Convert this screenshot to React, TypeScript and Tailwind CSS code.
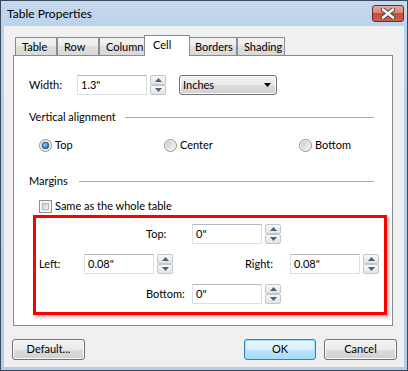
import React from 'react';

function Tri({ up, color = '#4c607f' }: { up?: boolean; color?: string }) {
  return (
    <svg width="7" height="4" viewBox="0 0 7 4">
      <polygon points={up ? '3.5,0 7,4 0,4' : '0,0 7,0 3.5,4'} fill={color} />
    </svg>
  );
}

function Spinner() {
  return (
    <div className="ml-[3px] flex h-[20px] w-[16px] flex-col">
      <div className="flex h-[10px] items-center justify-center rounded-[2px] border border-[#c3c6cc] bg-[linear-gradient(#f8f8f8,#e4e4e4)]">
        <Tri up />
      </div>
      <div className="flex h-[10px] items-center justify-center rounded-[2px] border border-[#c3c6cc] bg-[linear-gradient(#f8f8f8,#e4e4e4)]">
        <Tri />
      </div>
    </div>
  );
}

function Field({ value }: { value: string }) {
  return (
    <div className="flex h-[20px] w-[70px] items-center border border-[#dcdfe4] border-t-[#b5b8bf] bg-white pl-[3px]">
      {value}
    </div>
  );
}

function Radio({ checked }: { checked?: boolean }) {
  return (
    <svg width="13" height="13" viewBox="0 0 13 13">
      <defs>
        <linearGradient id="rbg" x1="0" y1="0" x2="1" y2="1">
          <stop offset="0" stopColor="#c9c9c9" />
          <stop offset="1" stopColor="#f7f7f7" />
        </linearGradient>
        <radialGradient id="rdot" cx="0.4" cy="0.4" r="0.6">
          <stop offset="0" stopColor="#8ad8fa" />
          <stop offset="1" stopColor="#1e64a4" />
        </radialGradient>
      </defs>
      <circle cx="6.5" cy="6.5" r="6" fill="#f4f4f4" stroke="#8e8f8f" />
      <circle cx="6.5" cy="6.5" r="4.5" fill="url(#rbg)" />
      {checked && <circle cx="6.5" cy="6.5" r="3.3" fill="url(#rdot)" stroke="#1b4f7c" strokeWidth="0.8" />}
    </svg>
  );
}

function Tab({ label, w }: { label: string; w: string }) {
  return (
    <div
      className={`${w} mt-[2px] h-[18px] border border-b-0 border-[#898c95] bg-[linear-gradient(#f3f3f3,#ececec_50%,#dfdfdf_50%,#d9d9d9)] pl-[6px] leading-[18px]`}
    >
      {label}
    </div>
  );
}

function Btn({ label, w, primary }: { label: string; w: string; primary?: boolean }) {
  return (
    <div
      className={
        primary
          ? `${w} flex h-[21px] items-center justify-center rounded-[3px] border border-[#3c7fb1] bg-[linear-gradient(#eaf6fd,#d9f0fc_50%,#bee6fd_50%,#a7d9f5)] shadow-[inset_0_0_0_1px_#9ee1fb]`
          : `${w} flex h-[21px] items-center justify-center rounded-[3px] border border-[#707070] bg-[linear-gradient(#f2f2f2,#ebebeb_50%,#dddddd_50%,#cfcfcf)] shadow-[inset_0_0_0_1px_#fbfbfb]`
      }
    >
      {label}
    </div>
  );
}

function Header({ label, gap }: { label: string; gap: string }) {
  return (
    <div className="flex h-[14px] items-center pl-[15px] pr-[18px] leading-[14px]">
      <span>{label}</span>
      <div className={`${gap} h-px flex-1 bg-[#a9a9a9]`} />
    </div>
  );
}

export default function App() {
  return (
    <div className="flex h-[371px] w-[408px] flex-col border border-[#3b4b5e] bg-[linear-gradient(#c5d9ef,#b9d1ea_30px,#b4cce7)] font-['Lato','Liberation_Sans',sans-serif] text-[11px] text-black">
      {/* title bar */}
      <div className="flex h-[25px] items-center justify-between pl-[6px] pr-[3px]">
        <span className="text-[12px]">Table Properties</span>
        <div className="flex h-[17px] w-[32px] items-center justify-center rounded-[3px] border border-[#6e2a24] bg-[linear-gradient(#e8ab9f,#d88574_45%,#c64c3b_50%,#c9604d)]">
          <svg width="16" height="11" viewBox="0 0 16 11">
            <path d="M3 1.5 L13 9.5 M13 1.5 L3 9.5" stroke="#4b4b4b" strokeWidth="4.5" strokeLinecap="round" />
            <path d="M3 1.5 L13 9.5 M13 1.5 L3 9.5" stroke="#f2f2f2" strokeWidth="2.6" strokeLinecap="round" />
          </svg>
        </div>
      </div>

      {/* client */}
      <div className="mx-[3px] flex h-[341px] flex-col bg-[#f0f0f0] pt-[9px]">
        <div className="ml-[11px] flex h-[20px] items-start">
          <Tab label="Table" w="w-[42px]" />
          <Tab label="Row" w="w-[42px]" />
          <Tab label="Column" w="w-[47px]" />
          <div className="relative z-10 -mx-[2px] h-[21px] w-[46px] border border-b-0 border-[#898c95] bg-white pl-[8px] leading-[17px]">
            Cell
          </div>
          <Tab label="Borders" w="w-[49px]" />
          <Tab label="Shading" w="w-[48px]" />
        </div>

        <div className="ml-[9px] flex h-[271px] w-[380px] flex-col border border-[#898c95] bg-white pt-[19px]">
          <div className="ml-[15px] flex h-[20px] items-center">
            <span className="w-[48px]">Width:</span>
            <Field value={'1.3"'} />
            <Spinner />
            <div className="ml-[13px] flex h-[20px] w-[98px] items-center justify-between rounded-[3px] border border-[#707070] bg-[linear-gradient(#f2f2f2,#ebebeb_50%,#dddddd_50%,#cfcfcf)] pl-[3px] pr-[5px] shadow-[inset_0_0_0_1px_#fbfbfb]">
              <span>Inches</span>
              <Tri color="#000" />
            </div>
          </div>

          <div className="mt-[15px]">
            <Header label="Vertical alignment" gap="ml-[9px]" />
          </div>

          <div className="ml-[25px] mt-[15px] flex h-[13px] items-center">
            <div className="flex w-[125px] items-center gap-[3px]">
              <Radio checked />
              <span>Top</span>
            </div>
            <div className="flex w-[135px] items-center gap-[3px]">
              <Radio />
              <span>Center</span>
            </div>
            <div className="flex items-center gap-[3px]">
              <Radio />
              <span>Bottom</span>
            </div>
          </div>

          <div className="mt-[22px]">
            <Header label="Margins" gap="ml-[11px]" />
          </div>

          <div className="ml-[25px] mt-[12px] flex h-[13px] items-center gap-[3px]">
            <div className="h-[13px] w-[13px] border border-[#8e8f8f] bg-[#f4f4f4] p-[2px]">
              <div className="h-full w-full border border-[#b1b5ba] bg-[linear-gradient(135deg,#c8ccd2,#f2f3f4)]" />
            </div>
            <span>Same as the whole table</span>
          </div>

          <div className="ml-[19px] mt-[2px] flex h-[100px] w-[354px] flex-col gap-[10px] border-[3px] border-[#ff0000] pt-[6px] shadow-[2px_2px_3px_rgba(0,0,0,0.3)]">
            <div className="ml-[110px] flex h-[20px] items-center">
              <span className="w-[46px]">Top:</span>
              <Field value={'0"'} />
              <Spinner />
            </div>
            <div className="ml-[3px] flex h-[20px] items-center">
              <span className="w-[45px]">Left:</span>
              <Field value={'0.08"'} />
              <Spinner />
              <span className="ml-[72px] w-[45px]">Right:</span>
              <Field value={'0.08"'} />
              <Spinner />
            </div>
            <div className="ml-[110px] flex h-[20px] items-center">
              <span className="w-[46px]">Bottom:</span>
              <Field value={'0"'} />
              <Spinner />
            </div>
          </div>
        </div>

        <div className="mt-[13px] flex pl-[8px] pr-[7px]">
          <Btn label="Default..." w="w-[73px]" />
          <div className="flex-1" />
          <Btn label="OK" w="w-[72px]" primary />
          <div className="w-[8px]" />
          <Btn label="Cancel" w="w-[73px]" />
        </div>
      </div>
    </div>
  );
}
